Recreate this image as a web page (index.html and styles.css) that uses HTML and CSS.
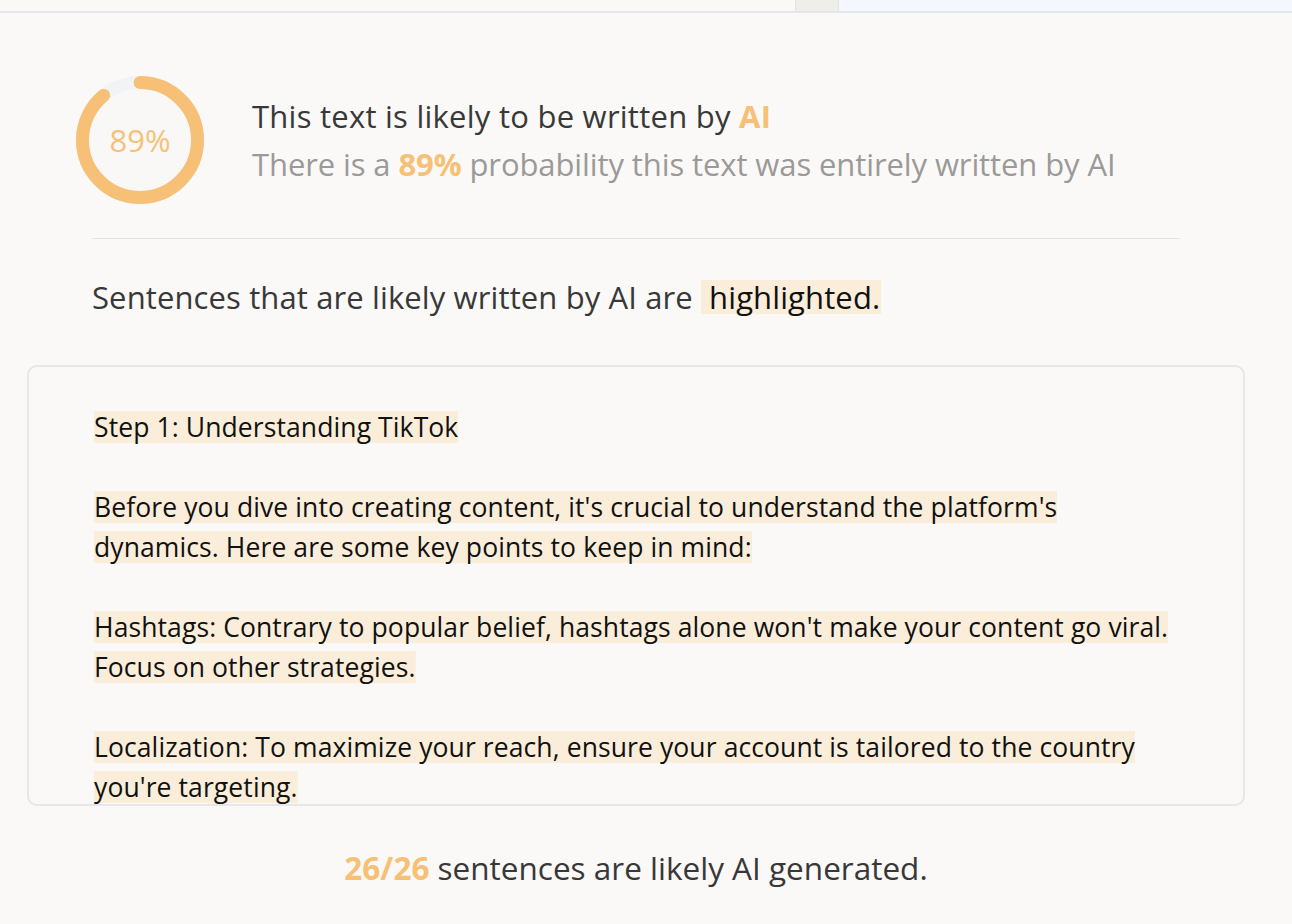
FILE: index.html
```html
<!DOCTYPE html>
<html>
<head lang="en">
    <meta charset="UTF-8">
    <title>AI Content Detector - Result</title>
    <link rel="stylesheet" href="styles.css">
</head>
<body>
<div class="topbar">
    <div class="topbar-left"></div>
    <div class="topbar-tab"></div>
    <div class="topbar-right"></div>
</div>
<div class="page">
    <div class="result">
        <div class="gauge">
            <svg width="128" height="128" viewBox="0 0 128 128">
                <circle cx="64" cy="64" r="51" fill="#f9f8f7"/>
                <circle cx="64" cy="64" r="57.5" fill="none" stroke="#f2f3f5" stroke-width="13"/>
                <!-- 89% of the ring, starting at 12 o'clock -->
                <circle cx="64" cy="64" r="57.5" fill="none" stroke="#f6c177" stroke-width="13"
                        stroke-linecap="round" stroke-dasharray="321.5 400"
                        transform="rotate(-90 64 64)"/>
            </svg>
            <span class="gauge-value">89%</span>
        </div>
        <div class="verdict">
            <p class="verdict-title">This text is likely to be written by <b class="accent">AI</b></p>
            <p class="verdict-sub">There is a <b class="accent">89%</b> probability this text was entirely written by AI</p>
        </div>
    </div>
    <hr class="divider">
    <p class="legend">Sentences that are likely written by AI are <span class="mark legend-mark">highlighted.</span></p>
    <div class="textbox">
        <p><span class="mark">Step 1: Understanding TikTok</span></p>
        <p><span class="mark">Before you dive into creating content, it's crucial to understand the platform's dynamics. Here are some key points to keep in mind:</span></p>
        <p><span class="mark">Hashtags: Contrary to popular belief, hashtags alone won't make your content go viral. Focus on other strategies.</span></p>
        <p><span class="mark">Localization: To maximize your reach, ensure your account is tailored to the country you're targeting.</span></p>
        <p><span class="mark">Content Quality: Engaging, authentic and entertaining videos perform best on the For You page.</span></p>
    </div>
    <p class="summary"><b class="accent">26/26</b> sentences are likely AI generated.</p>
</div>
</body>
</html>
```

FILE: styles.css
```css
body {
    margin: 0;
    background: #faf9f7;
    font-family: "Open Sans", sans-serif;
    color: #3a3a3a;
}
.topbar {
    display: flex;
    height: 11px;
    border-bottom: 2px solid #e4e6ea;
}
.topbar-left {
    width: 795px;
    background: #faf9f7;
}
.topbar-tab {
    width: 42px;
    background: #f0eeeb;
    border-left: 1px solid #e3e3e3;
    border-right: 1px solid #e3e3e3;
}
.topbar-right {
    flex: 1;
    background: #f4f7fd;
}
.page {
    overflow: hidden;
}
.accent {
    color: #f6c177;
    font-weight: bold;
}
.result {
    display: flex;
    align-items: center;
    gap: 48px;
    padding: 63px 0 0 76px;
}
.gauge {
    position: relative;
    width: 128px;
    height: 128px;
}
.gauge svg {
    display: block;
}
.gauge-value {
    position: absolute;
    inset: 0;
    display: flex;
    align-items: center;
    justify-content: center;
    color: #f6c177;
    font-size: 31px;
}
.verdict p {
    margin: 0;
    font-size: 31px;
    line-height: 48px;
    letter-spacing: -0.1px;
}
.verdict-title {
    color: #383838;
}
.verdict .verdict-title {
    letter-spacing: 0.25px;
}
.verdict-sub {
    color: #9b9a99;
}
.divider {
    margin: 34px 112px 0 92px;
    border: 0;
    border-top: 1px solid #e4e4e4;
}
.legend {
    margin: 40px 0 0 92px;
    font-size: 31px;
    line-height: 36px;
    letter-spacing: 0.12px;
    color: #383838;
}
/* highlight band is a bit shorter than the font's content box */
.mark {
    background: linear-gradient(#faeedb, #faeedb) center / 100% 32px no-repeat;
    color: #111;
}
.legend-mark {
    padding: 0 1px 0 8px;
    background-size: 100% 34px;
}
.textbox {
    margin: 50px 47px 0 27px;
    height: 397px;
    padding: 40px 65px 0 65px;
    overflow: hidden;
    border: 2px solid #e6e7e9;
    border-radius: 10px;
    font-size: 26.5px;
    line-height: 40px;
    letter-spacing: 0.1px;
    color: #111;
}
.textbox p {
    margin: 0 0 40px;
}
.summary {
    margin: 42px 0 0;
    padding-right: 20px;
    text-align: center;
    font-size: 31.5px;
    line-height: 40px;
    color: #383838;
}
```
